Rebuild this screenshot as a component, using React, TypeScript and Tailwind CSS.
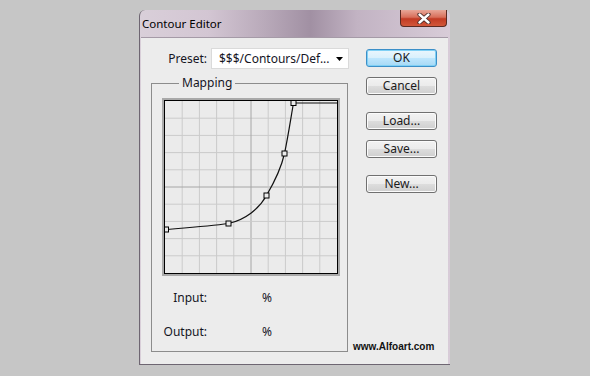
const ticks = [1, 2, 3, 4, 5, 6, 7, 8, 9]
const points: [number, number][] = [
  [1, 128.5],
  [63.5, 122.5],
  [101.5, 94.5],
  [119.5, 52.5],
  [128.5, 2],
]

function ContourGraph() {
  return (
    <div className="w-[178px] h-[178px] border-2 border-[#a9a9a9]">
      <div className="w-full h-full border border-black bg-[#ebebeb]">
        <svg width="172" height="172" viewBox="0 0 172 172" className="block">
          {ticks.map((i) => (
            <g key={i}>
              <line
                x1={i * 17.2}
                x2={i * 17.2}
                y1={0}
                y2={172}
                stroke={i === 5 ? '#a6a6a6' : '#cbcbcb'}
                strokeWidth="1"
              />
              <line
                y1={i * 17.2}
                y2={i * 17.2}
                x1={0}
                x2={172}
                stroke={i === 5 ? '#a6a6a6' : '#cbcbcb'}
                strokeWidth="1"
              />
            </g>
          ))}
          <path
            d="M1,128.5 C25,126.5 45,125 63.5,122.5 C80,119 94,108 101.5,94.5 C110,80 116,68 119.5,52.5 C123,36 126,16 128.5,2 L172,2"
            fill="none"
            stroke="#111"
            strokeWidth="1.2"
          />
          {points.map(([x, y], i) => (
            <rect
              key={i}
              x={x - 2.5}
              y={y - 2.5}
              width="5"
              height="5"
              fill="#ebebeb"
              stroke="#000"
              strokeWidth="1"
            />
          ))}
        </svg>
      </div>
    </div>
  )
}

function DialogButton({ label, primary, className }: { label: string; primary?: boolean; className?: string }) {
  return (
    <button
      className={
        'w-[71px] h-[18px] rounded-[3px] border text-[12px] leading-none text-[#1b1b1b] ' +
        (primary
          ? 'border-[#3c8fc8] bg-[linear-gradient(#eaf6fd_0%,#d9f0fc_50%,#bee6fd_51%,#a7d9f5_100%)] shadow-[inset_0_0_0_1px_#7fd0f5] '
          : 'border-[#707070] bg-[linear-gradient(#f2f2f2_0%,#ebebeb_50%,#dddddd_51%,#cfcfcf_100%)] shadow-[inset_0_0_0_1px_#fbfbfb] ') +
        (className ?? '')
      }
    >
      {label}
    </button>
  )
}

export default function App() {
  return (
    <div className="w-[590px] h-[376px] bg-[#c6c6c6] pt-[10px] pl-[139px] font-['Noto_Sans',sans-serif] text-[12px] text-[#15151f]">
      <div className="w-[311px] h-[355px] flex flex-col rounded-t-[6px] border-l border-b border-[#6e6672] pr-[2px] pl-[1px] bg-[linear-gradient(90deg,#d9cfd9_0%,#d3c6d3_22%,#b9aaba_40%,#a190a3_55%,#c2b3c3_70%,#d8ccd8_100%)]">
        {/* title bar */}
        <div className="h-[27px] flex items-start">
          <span className="mt-[5px] ml-[1px] text-[11.5px] text-black">Contour Editor</span>
          <button className="ml-auto mr-[1px] w-[47px] h-[17px] rounded-b-[4px] border border-t-0 border-[#5b2a22] bg-[linear-gradient(#e8a798_0%,#d86f5a_45%,#c23b24_55%,#d2573a_100%)] flex items-center justify-center">
            <svg width="14" height="11" viewBox="0 0 14 11">
              <path d="M2.5,1.5 L11.5,9.5 M11.5,1.5 L2.5,9.5" stroke="#4a2a26" strokeWidth="4.2" strokeLinecap="round" />
              <path d="M2.5,1.5 L11.5,9.5 M11.5,1.5 L2.5,9.5" stroke="#ffffff" strokeWidth="2.4" strokeLinecap="round" />
            </svg>
          </button>
        </div>

        {/* client area */}
        <div className="flex-1 flex bg-[#ececec] border-t border-[#a59aa7]">
          <div className="w-[208px] pl-[10px] flex flex-col">
            <div className="mt-[10px] h-[21px] flex items-center justify-end gap-[4px]">
              <span>Preset:</span>
              <div className="w-[138px] h-[21px] bg-white border border-[#dadada] flex items-center pl-[7px] pr-[5px]">
                <span className="flex-1">$$$/Contours/Def...</span>
                <svg width="7" height="4" viewBox="0 0 7 4">
                  <path d="M0,0 L7,0 L3.5,4 Z" fill="#000" />
                </svg>
              </div>
            </div>

            <fieldset className="mt-[6px] w-[197px] border border-[#8c8c8c] pl-[10px] pt-[7px] pb-[11px]">
              <legend className="ml-[17px] px-[3px] leading-[16px]">Mapping</legend>
              <ContourGraph />
              <div className="mt-[14px] grid grid-cols-[45px_auto] gap-x-[55px] gap-y-[18px] leading-[16px]">
                <span className="text-right">Input:</span>
                <span>%</span>
                <span className="text-right">Output:</span>
                <span>%</span>
              </div>
            </fieldset>
          </div>

          <div className="flex-1 flex flex-col">
            <DialogButton label="OK" primary className="ml-[17px] mt-[11px]" />
            <DialogButton label="Cancel" className="ml-[17px] mt-[10px]" />
            <DialogButton label="Load..." className="ml-[17px] mt-[17px]" />
            <DialogButton label="Save..." className="ml-[17px] mt-[10px]" />
            <DialogButton label="New..." className="ml-[17px] mt-[17px]" />
            <span className="mt-auto mb-[11px] ml-[4px] font-['Liberation_Sans',sans-serif] font-bold text-[10px] leading-[12px] text-[#111]">
              www.Alfoart.com
            </span>
          </div>
        </div>
      </div>
    </div>
  )
}
